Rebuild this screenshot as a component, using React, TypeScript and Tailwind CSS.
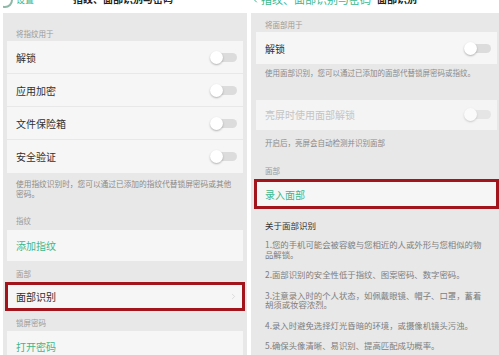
import { ChevronLeft, ChevronRight } from 'lucide-react';

function Toggle({ disabled = false }: { disabled?: boolean }) {
  return (
    <div className={`relative w-[27px] h-[13px] flex items-center ${disabled ? 'opacity-60' : ''}`}>
      <div className="ml-[5px] w-[22px] h-[9px] rounded-full bg-[#dcdcdc]" />
      <div className="absolute left-0 top-0 w-[13px] h-[13px] rounded-full bg-white shadow-[0_1px_2px_rgba(0,0,0,0.28)]" />
    </div>
  );
}

function Label({ text, className = '' }: { text: string; className?: string }) {
  return <div className={`px-[9px] text-[7.5px] leading-[9px] text-[#9a9a9a] ${className}`}>{text}</div>;
}

function Row({ text, last = false, disabled = false, height = 'h-[33px]' }: { text: string; last?: boolean; disabled?: boolean; height?: string }) {
  return (
    <div className={`${height} flex items-center justify-between pl-[9px] pr-[6px] ${last ? '' : 'border-b border-[#e8e8e8]'}`}>
      <span className={`text-[10px] ${disabled ? 'text-[#c4c4c4]' : 'text-[#303030]'}`}>{text}</span>
      <Toggle disabled={disabled} />
    </div>
  );
}

export default function App() {
  const tips = [
    '1.您的手机可能会被容貌与您相近的人或外形与您相似的物品解锁。',
    '2.面部识别的安全性低于指纹、图案密码、数字密码。',
    '3.注意录入时的个人状态，如佩戴眼镜、帽子、口罩，蓄着胡须或妆容浓烈。',
    '4.录入时避免选择灯光昏暗的环境，或摄像机镜头污浊。',
    '5.确保头像清晰、易识别、提高匹配成功概率。',
  ];

  return (
    <div className="w-[499px] h-[355px] bg-white flex overflow-hidden font-['Noto_Sans_CJK_SC',sans-serif]">
      {/* left phone */}
      <div className="w-[247px] pl-[3px] flex flex-col shrink-0">
        <div className="h-[13px] shrink-0 overflow-hidden flex items-start">
          <div className="-mt-[8px] flex items-center text-[#3cb88c]">
            <div className="w-[16px] h-[16px] rounded-full border-[2px] border-[#8fb8a8] -ml-[6px]" />
            <span className="ml-[3px] text-[9px] leading-[14px]">设置</span>
          </div>
          <div className="-mt-[8px] ml-[39px] text-[10px] leading-[14px] font-bold text-[#222]">指纹、面部识别与密码</div>
        </div>
        <div className="flex-1 bg-[#e8e8e8] px-[4px]">
          <Label text="将指纹用于" className="pt-[16px] pb-[3px]" />
          <div className="bg-[#f6f6f6]">
            <Row text="解锁" />
            <Row text="应用加密" />
            <Row text="文件保险箱" />
            <Row text="安全验证" last />
          </div>
          <div className="px-[9px] pt-[6px] text-[7.7px] leading-[9.5px] text-[#8a8a8a]">
            使用指纹识别时，您可以通过已添加的指纹代替锁屏密码或其他密码。
          </div>
          <Label text="指纹" className="pt-[18px] pb-[5px]" />
          <div className="bg-[#f6f6f6] h-[31px] flex items-center pl-[9px] text-[10px] text-[#3cb88c]">添加指纹</div>
          <Label text="面部" className="pt-[8px] pb-[4px]" />
          <div className="-mx-[2px] border-[3px] border-[#a3151c]">
            <div className="h-[23px] flex items-center justify-between pl-[8px] pr-[4px] bg-[#f6f6f6]">
              <span className="text-[10px] text-[#303030]">面部识别</span>
              <ChevronRight size={9} strokeWidth={1.5} className="text-[#c8c8c8]" />
            </div>
          </div>
          <Label text="锁屏密码" className="pt-[7px] pb-[4px]" />
          <div className="bg-[#f6f6f6] h-[31px] flex items-center pl-[9px] text-[10px] text-[#3cb88c]">打开密码</div>
        </div>
      </div>

      <div className="w-[4px] shrink-0" />

      {/* right phone */}
      <div className="w-[248px] flex flex-col shrink-0">
        <div className="h-[13px] shrink-0 overflow-hidden flex items-start">
          <div className="-mt-[9px] flex items-center text-[#3cb88c]">
            <ChevronLeft size={12} strokeWidth={2} className="-ml-[2px]" />
            <span className="text-[11px] leading-[16px]">指纹、面部识别与密码</span>
          </div>
          <div className="-mt-[8px] ml-[6px] text-[10px] leading-[14px] font-bold text-[#222]">面部识别</div>
        </div>
        <div className="flex-1 bg-[#e8e8e8] pl-[5px] pr-[2px]">
          <Label text="将面部用于" className="pt-[7px] pb-[3px]" />
          <div className="bg-[#f6f6f6]">
            <Row text="解锁" last height="h-[32px]" />
          </div>
          <div className="px-[9px] pt-[4px] text-[7.5px] leading-[9.5px] text-[#8a8a8a]">
            使用面部识别，您可以通过已添加的面部代替锁屏密码或指纹。
          </div>
          <div className="mt-[22px] bg-[#f4f4f4]">
            <Row text="亮屏时使用面部解锁" last disabled height="h-[30px]" />
          </div>
          <div className="px-[9px] pt-[8px] text-[7.5px] leading-[9.5px] text-[#8a8a8a]">
            开启后，亮屏会自动检测并识别面部
          </div>
          <Label text="面部" className="pt-[19px] pb-[4px]" />
          <div className="-mx-[2px] border-[3px] border-[#a3151c]">
            <div className="h-[24px] flex items-center pl-[8px] bg-[#f6f6f6] text-[10px] text-[#3cb88c]">录入面部</div>
          </div>
          <div className="px-[9px] pt-[10px] text-[8.5px] leading-[12px] text-[#333]">关于面部识别</div>
          <div className="pl-[9px] pr-[10px] pt-[9px] flex flex-col gap-[11px]">
            {tips.map((t) => (
              <div key={t} className="text-[8.4px] leading-[9.5px] text-[#7d7d7d]">{t}</div>
            ))}
          </div>
        </div>
      </div>
    </div>
  );
}
